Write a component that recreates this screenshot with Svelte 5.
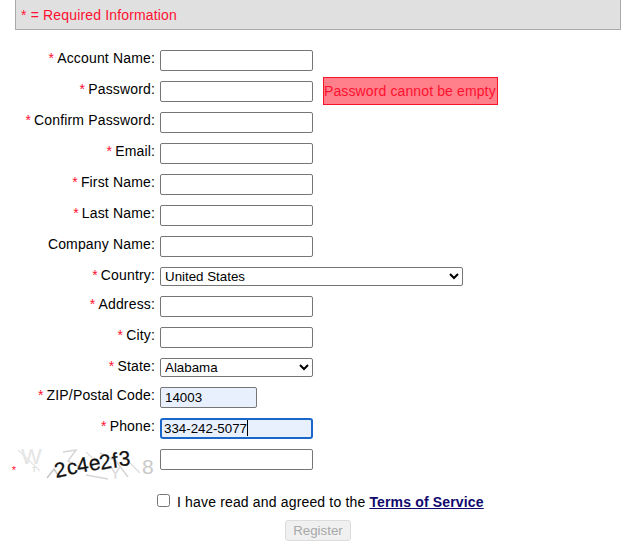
<script>
  const before = [
    { label: 'Account Name:', req: true },
    { label: 'Password:', req: true, error: 'Password cannot be empty' },
    { label: 'Confirm Password:', req: true },
    { label: 'Email:', req: true },
    { label: 'First Name:', req: true },
    { label: 'Last Name:', req: true },
    { label: 'Company Name:', req: false }
  ];
</script>

<div class="page">
  <div class="banner">* = Required Information</div>
  <form class="form" onsubmit={(e) => e.preventDefault()}>
    {#each before as f}
      <div class="row">
        <label class="lab">{#if f.req}<span class="req">*</span>{/if}{f.label}</label>
        <div class="field">
          <input class="txt" type="text" />
          {#if f.error}<span class="err">{f.error}</span>{/if}
        </div>
      </div>
    {/each}
    <div class="row">
      <label class="lab"><span class="req">*</span>Country:</label>
      <div class="field"><select class="sel wide"><option>United States</option></select></div>
    </div>
    <div class="row">
      <label class="lab"><span class="req">*</span>Address:</label>
      <div class="field"><input class="txt" type="text" /></div>
    </div>
    <div class="row">
      <label class="lab"><span class="req">*</span>City:</label>
      <div class="field"><input class="txt" type="text" /></div>
    </div>
    <div class="row">
      <label class="lab"><span class="req">*</span>State:</label>
      <div class="field"><select class="sel narrow"><option>Alabama</option></select></div>
    </div>
    <div class="row">
      <label class="lab"><span class="req">*</span>ZIP/Postal Code:</label>
      <div class="field"><input class="txt zip filled" type="text" value="14003" /></div>
    </div>
    <div class="row">
      <label class="lab"><span class="req">*</span>Phone:</label>
      <div class="field phone">
        <input class="txt filled focus" type="text" value="334-242-5077" />
        <span class="caret"></span>
      </div>
    </div>
    <div class="row captcha">
      <div class="lab capt">
        <span class="req small">*</span>
        <svg class="capimg" width="139" height="38" viewBox="0 0 139 38" aria-label="captcha">
          <g font-family="'Liberation Sans', sans-serif" fill="#e4e4e4">
            <text x="5" y="21" font-size="22">W</text>
            <text x="16" y="29" font-size="7" fill="#c8c8c8">T</text>
            <text x="94" y="36" font-size="16" fill="#d8d8d8">Y</text>
            <text x="126" y="31" font-size="21" fill="#cacaca">8</text>
          </g>
          <g fill="none" stroke="#d6d6d6" stroke-width="1.5">
            <path d="M2 7 L24 28" stroke="#e6e6e6" />
            <path d="M31 35 L38 26 L44 35" stroke="#c6c6c6" />
            <path d="M47 9 L60 7 L52 18 L70 28" />
            <path d="M70 9 L84 22" stroke="#e2e2e2" />
            <path d="M70 32 L92 36" />
            <path d="M84 10 L100 18 L112 34" />
            <path d="M112 18 L124 30" stroke="#e0e0e0" />
          </g>
          <g font-family="'Liberation Sans', sans-serif" font-size="21" fill="#111" stroke="#111" stroke-width="0.25">
            <text x="40" y="35" transform="rotate(-12 40 35)">2</text>
            <text x="52" y="32" transform="rotate(-10 52 32)">c</text>
            <text x="62" y="30" transform="rotate(-10 62 30)">4</text>
            <text x="74" y="28" transform="rotate(-10 74 28)">e</text>
            <text x="85" y="27" transform="rotate(-12 85 27)">2</text>
            <text x="97" y="25" transform="rotate(-8 97 25)">f</text>
            <text x="103" y="23" transform="rotate(-3 103 23)">3</text>
          </g>
        </svg>
      </div>
      <div class="field"><input class="txt" type="text" /></div>
    </div>
    <div class="terms">
      <input class="chk" type="checkbox" id="tos" />
      <label for="tos">I have read and agreed to the <a href="#tos">Terms of Service</a></label>
    </div>
    <div class="actions"><button class="reg" type="submit" disabled>Register</button></div>
  </form>
</div>

<style>
  :global(body) { margin: 0; background: #fff; }
  .page {
    width: 628px;
    height: 544px;
    overflow: hidden;
    font-family: "Liberation Sans", Arial, sans-serif;
    font-size: 14px;
    letter-spacing: 0.16px;
    color: #000;
  }
  .banner {
    box-sizing: border-box;
    width: 606px;
    height: 30px;
    margin-left: 15px;
    padding: 6px 0 0 5px;
    background: #e0e0e0;
    border: 1px solid #aaa;
    border-top: 0;
    color: #ff1030;
    font-size: 14px;
    line-height: 18px;
  }
  .form {
    display: flex;
    flex-direction: column;
    gap: 10px;
    padding-top: 20px;
  }
  .row {
    display: grid;
    grid-template-columns: 155px 1fr;
    column-gap: 5px;
  }
  .lab {
    text-align: right;
    line-height: 16px;
  }
  .req { color: #ff1030; margin-right: 3px; }
  .field { display: flex; align-items: flex-start; position: relative; }
  .txt {
    box-sizing: border-box;
    width: 153px;
    height: 21px;
    margin: 0;
    padding: 1px 4px;
    border: 1px solid #767676;
    border-radius: 2px;
    background: #fff;
    font: 13.33px "Liberation Sans", Arial, sans-serif;
    color: #000;
    outline: 0;
  }
  .zip { width: 97px; }
  .filled { background: #e8f0fe; }
  .focus {
    border: 2px solid #1a66c9;
    border-radius: 3px;
    padding: 0 2px;
  }
  .caret {
    position: absolute;
    left: 87px;
    top: 2px;
    width: 1px;
    height: 16px;
    background: #000;
  }
  .err {
    box-sizing: border-box;
    width: 175px;
    height: 28px;
    margin: -4px -3px -3px 10px;
    padding: 0;
    border: 1px solid #f5142c;
    background: #ff808a;
    color: #ff1030;
    font-size: 14px;
    letter-spacing: 0.12px;
    line-height: 26px;
    white-space: nowrap;
  }
  .sel {
    box-sizing: border-box;
    height: 19px;
    margin: 0;
    border: 1px solid #767676;
    border-radius: 2px;
    background: #fff;
    font: 13.33px "Liberation Sans", Arial, sans-serif;
    color: #000;
  }
  .wide { width: 303px; }
  .narrow { width: 153px; }
  .captcha { height: 34px; }
  .capt { display: flex; justify-content: flex-end; letter-spacing: 0; height: 34px; }
  .small { font-size: 11px; margin: 15px 0 0 0; line-height: 12px; }
  .capimg { display: block; margin-top: -6px; flex: none; }
  .terms {
    display: flex;
    align-items: center;
    padding-left: 157px;
    height: 17px;
  }
  .chk {
    width: 13px;
    height: 13px;
    margin: -3px 7px 0 0;
  }
  .terms a { color: #10086e; font-weight: 700; }
  .actions { padding-left: 285px; }
  .reg {
    box-sizing: border-box;
    width: 66px;
    height: 21px;
    margin: 0;
    padding: 0;
    border: 1px solid #dcdcdc;
    border-radius: 3px;
    background: #f0f0f0;
    color: #a8a8a8;
    font: 13.33px "Liberation Sans", Arial, sans-serif;
  }
</style>
